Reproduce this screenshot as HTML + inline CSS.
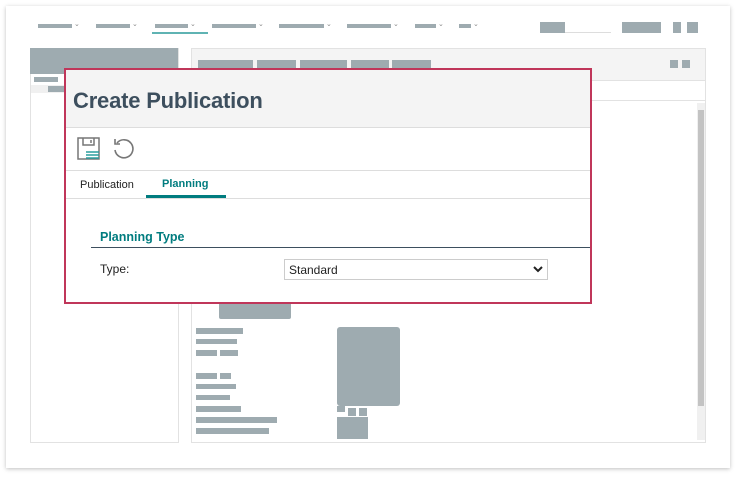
<!DOCTYPE html>
<html><head><style>
body{margin:0;width:740px;height:478px;background:#fff;position:relative;overflow:hidden;font-family:"Liberation Sans",sans-serif}
.a{position:absolute}
.g{position:absolute;background:#9eabb0}
.c{position:absolute;font-size:7px;color:#888;top:20px}
</style></head><body>
<div class="a" style="left:6px;top:6px;width:724px;height:462px;background:#fff;box-shadow:0 1px 4px rgba(0,0,0,.25)"></div>
<div class="g" style="left:38px;top:24px;width:34px;height:4px"></div><span class="c" style="left:74px">⌄</span>
<div class="g" style="left:96px;top:24px;width:34px;height:4px"></div><span class="c" style="left:132px">⌄</span>
<div class="g" style="left:155px;top:24px;width:33px;height:4px"></div><span class="c" style="left:190px">⌄</span>
<div class="a" style="left:152px;top:32px;width:56px;height:2px;background:#5fb3b3"></div>
<div class="g" style="left:212px;top:24px;width:44px;height:4px"></div><span class="c" style="left:258px">⌄</span>
<div class="g" style="left:279px;top:24px;width:45px;height:4px"></div><span class="c" style="left:326px">⌄</span>
<div class="g" style="left:347px;top:24px;width:44px;height:4px"></div><span class="c" style="left:393px">⌄</span>
<div class="g" style="left:415px;top:24px;width:21px;height:4px"></div><span class="c" style="left:438px">⌄</span>
<div class="g" style="left:459px;top:24px;width:12px;height:4px"></div><span class="c" style="left:473px">⌄</span>
<div class="g" style="left:540px;top:22px;width:25px;height:11px"></div>
<div class="a" style="left:565px;top:32px;width:46px;height:1px;background:#ddd"></div>
<div class="g" style="left:622px;top:22px;width:39px;height:11px"></div>
<div class="g" style="left:673px;top:22px;width:8px;height:11px"></div>
<div class="g" style="left:687px;top:22px;width:11px;height:11px"></div>
<div class="a" style="left:30px;top:48px;width:147px;height:393px;border:1px solid #e2e2e2"></div>
<div class="g" style="left:30px;top:48px;width:148px;height:26px"></div>
<div class="g" style="left:34px;top:77px;width:24px;height:5px"></div>
<div class="a" style="left:31px;top:85px;width:146px;height:8px;background:#f0f0f0"></div>
<div class="g" style="left:48px;top:86px;width:22px;height:6px"></div>
<div class="a" style="left:191px;top:48px;width:513px;height:393px;border:1px solid #e2e2e2"></div>
<div class="a" style="left:192px;top:49px;width:513px;height:31px;background:#f4f4f4;border-bottom:1px solid #e2e2e2"></div>
<div class="g" style="left:198px;top:60px;width:55px;height:11px"></div>
<div class="g" style="left:257px;top:60px;width:39px;height:11px"></div>
<div class="g" style="left:300px;top:60px;width:47px;height:11px"></div>
<div class="g" style="left:351px;top:60px;width:38px;height:11px"></div>
<div class="g" style="left:392px;top:60px;width:39px;height:11px"></div>
<div class="g" style="left:670px;top:60px;width:8px;height:8px"></div>
<div class="g" style="left:682px;top:60px;width:8px;height:8px"></div>
<div class="a" style="left:192px;top:100px;width:513px;height:1px;background:#e2e2e2"></div>
<div class="a" style="left:697px;top:103px;width:8px;height:337px;background:#f0f0f0"></div>
<div class="a" style="left:698px;top:110px;width:6px;height:296px;background:#c3c3c3"></div>
<div class="g" style="left:219px;top:302px;width:72px;height:17px;border-radius:2px"></div>
<div class="g" style="left:196px;top:328px;width:47px;height:6px"></div>
<div class="g" style="left:196px;top:339px;width:41px;height:5px"></div>
<div class="g" style="left:196px;top:350px;width:21px;height:6px"></div>
<div class="g" style="left:220px;top:350px;width:18px;height:6px"></div>
<div class="g" style="left:196px;top:373px;width:21px;height:6px"></div>
<div class="g" style="left:220px;top:373px;width:11px;height:6px"></div>
<div class="g" style="left:196px;top:384px;width:40px;height:5px"></div>
<div class="g" style="left:196px;top:395px;width:34px;height:5px"></div>
<div class="g" style="left:196px;top:406px;width:45px;height:6px"></div>
<div class="g" style="left:196px;top:417px;width:81px;height:6px"></div>
<div class="g" style="left:196px;top:428px;width:73px;height:6px"></div>
<div class="g" style="left:337px;top:327px;width:63px;height:79px;border-radius:3px"></div>
<div class="g" style="left:337px;top:406px;width:8px;height:6px"></div>
<div class="g" style="left:348px;top:408px;width:8px;height:8px"></div>
<div class="g" style="left:359px;top:408px;width:8px;height:8px"></div>
<div class="g" style="left:337px;top:417px;width:31px;height:22px"></div>

<div class="a" style="left:64px;top:68px;width:524px;height:232px;border:2px solid #c0365a;background:#fff">
 <div class="a" style="left:0;top:0;width:524px;height:57px;background:#f4f4f4;border-bottom:1px solid #ddd"></div>
 <div class="a" style="left:7px;top:18px;font-size:22px;font-weight:bold;color:#3d4f5e;letter-spacing:-0.2px">Create Publication</div>
 <svg class="a" style="left:11px;top:67px" width="24" height="24" viewBox="0 0 24 24" fill="none" stroke="#777" stroke-width="1.5"><rect x="1" y="1" width="21" height="21"/><path d="M6 1v7h11V1M14 3v3"/><path d="M9 15h13M9 18h13M9 21h13" stroke="#2a9d9d"/></svg>
 <svg class="a" style="left:46px;top:67px" width="24" height="24" viewBox="0 0 24 24" fill="none" stroke="#777" stroke-width="1.6"><path d="M5 6A9 9 0 1 1 3 13"/><path d="M3 2v5h5"/></svg>
 <div class="a" style="left:0;top:100px;width:524px;height:1px;background:#ddd"></div>
 <div class="a" style="left:14px;top:109px;font-size:11px;color:#222">Publication</div>
 <div class="a" style="left:96px;top:108px;font-size:11px;font-weight:bold;color:#007c7f">Planning</div>
 <div class="a" style="left:80px;top:125px;width:80px;height:3px;background:#007c7f"></div>
 <div class="a" style="left:0;top:128px;width:524px;height:1px;background:#ddd"></div>
 <div class="a" style="left:34px;top:160px;font-size:12.5px;font-weight:bold;color:#007c7f">Planning Type</div>
 <div class="a" style="left:25px;top:177px;width:499px;height:1px;background:#3d4f5e"></div>
 <div class="a" style="left:34px;top:192px;font-size:12px;color:#222">Type:</div>
 <div class="a" style="left:218px;top:189px;width:262px;height:19px;border:1px solid #ccc;font-size:12px;color:#222"><span style="position:absolute;left:4px;top:3px">Standard</span>
 <svg class="a" style="left:248px;top:6px" width="10" height="7" viewBox="0 0 10 7"><path d="M1 1l4 4 4-4" stroke="#222" stroke-width="2" fill="none"/></svg></div>
</div>
</body></html>
